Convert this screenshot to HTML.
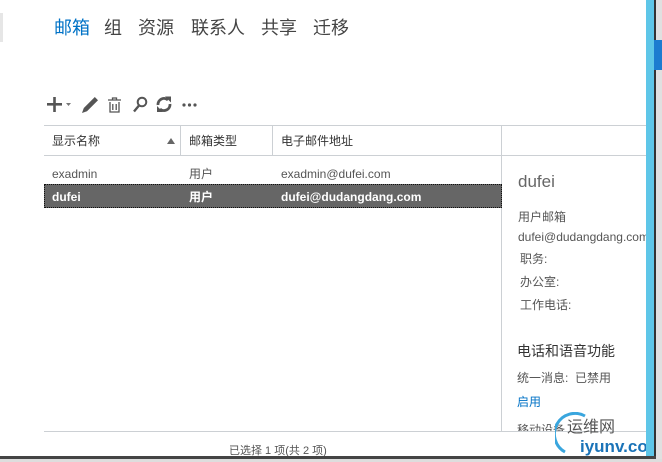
<!DOCTYPE html>
<html><head><meta charset="utf-8"><style>
*{margin:0;padding:0;box-sizing:border-box}
body{width:662px;height:462px;overflow:hidden;background:#fff;position:relative;font-family:"Segoe UI","Liberation Sans","Noto Sans CJK SC",sans-serif;color:#444}
.a{position:absolute;white-space:nowrap;line-height:16px}
.nav{top:18px;font-size:18px;line-height:20px;color:#444}
.hd{font-size:12px;color:#333;top:133px}
.r{font-size:12px;color:#555}
.sel{font-size:12px;color:#fff;font-weight:bold}
.p{font-size:12px;color:#555}
</style></head><body>
<div class="a" style="left:0;top:13px;width:3px;height:29px;background:#e6e6e6"></div>
<div class="a nav" style="left:54px;color:#0072c6">邮箱</div>
<div class="a nav" style="left:104px">组</div>
<div class="a nav" style="left:138px">资源</div>
<div class="a nav" style="left:191px">联系人</div>
<div class="a nav" style="left:261px">共享</div>
<div class="a nav" style="left:313px">迁移</div>

<svg class="a" style="left:44px;top:94px" width="160" height="20" viewBox="0 0 160 20">
<g fill="#555" stroke="#555">
<rect x="3" y="9" width="15" height="2.6" stroke="none"/><rect x="9.2" y="3" width="2.6" height="15" stroke="none"/>
<path d="M22 9h5l-2.5 3z" stroke="none" fill="#777"/>
<path d="M38 19l1.8-5 11-11 3.2 3.2-11 11z" stroke="none"/>
<g fill="none" stroke-width="1.3"><path d="M64 6h13M68.5 6V4h4v2M66 8v10h9V8M68.8 10v6M72.2 10v6"/></g>
<circle cx="98" cy="8" r="4.3" fill="none" stroke-width="2"/><path d="M95 11.5l-5 6" stroke-width="2.4"/>
<path d="M114 11a6 6 0 0 1 10-5M126 10a6 6 0 0 1-10 5" fill="none" stroke-width="2.8"/>
<path d="M121 2.5h6v6z M119 18h-6v-6z" stroke="none"/>
<circle cx="140" cy="11" r="1.6" stroke="none"/><circle cx="145.5" cy="11" r="1.6" stroke="none"/><circle cx="151" cy="11" r="1.6" stroke="none"/>
</g></svg>

<div class="a" style="left:44px;top:125px;width:602px;height:1px;background:#ccd0d4"></div>
<div class="a" style="left:44px;top:155px;width:602px;height:1px;background:#ccd0d4"></div>
<div class="a" style="left:180px;top:126px;width:1px;height:29px;background:#ccd0d4"></div>
<div class="a" style="left:272px;top:126px;width:1px;height:29px;background:#ccd0d4"></div>
<div class="a" style="left:501px;top:126px;width:1px;height:305px;background:#ccd0d4"></div>
<div class="a hd" style="left:52px">显示名称</div>
<div class="a" style="left:167px;top:138px;width:0;height:0;border-left:4px solid transparent;border-right:4px solid transparent;border-bottom:6px solid #666"></div>
<div class="a hd" style="left:189px">邮箱类型</div>
<div class="a hd" style="left:281px">电子邮件地址</div>

<div class="a r" style="left:52px;top:166px">exadmin</div>
<div class="a r" style="left:189px;top:166px">用户</div>
<div class="a r" style="left:281px;top:166px">exadmin@dufei.com</div>
<div class="a" style="left:44px;top:184px;width:458px;height:24px;background:#666;border:1px dotted #111"></div>
<div class="a sel" style="left:52px;top:189px">dufei</div>
<div class="a sel" style="left:189px;top:189px">用户</div>
<div class="a sel" style="left:281px;top:189px">dufei@dudangdang.com</div>

<div class="a" style="left:518px;top:172px;font-size:17px;line-height:20px;color:#666">dufei</div>
<div class="a p" style="left:518px;top:209px">用户邮箱</div>
<div class="a p" style="left:518px;top:229px">dufei@dudangdang.com</div>
<div class="a p" style="left:520px;top:251px">职务:</div>
<div class="a p" style="left:520px;top:274px">办公室:</div>
<div class="a p" style="left:520px;top:297px">工作电话:</div>
<div class="a" style="left:517px;top:342px;font-size:14px;line-height:18px;color:#333">电话和语音功能</div>
<div class="a p" style="left:517px;top:370px">统一消息:&nbsp; 已禁用</div>
<div class="a p" style="left:517px;top:394px;color:#0072c6">启用</div>
<div class="a p" style="left:517px;top:422px;height:9px;overflow:hidden">移动设备</div>

<div class="a" style="left:44px;top:431px;width:602px;height:1px;background:#ccd0d4"></div>
<div class="a" style="left:229px;top:444px;font-size:11px;line-height:14px;color:#555">已选择 1 项(共 2 项)</div>

<div class="a" style="left:567px;top:418px;font-size:16px;line-height:20px;color:#555">运维网</div>
<div class="a" style="left:580px;top:437px;font-size:17px;line-height:20px;color:#1a73b8;font-weight:bold">iyunv.com</div>
<svg class="a" style="left:555px;top:412px" width="40" height="46"><path d="M30 4a18 18 0 0 0-20 36" fill="none" stroke="#3aa6de" stroke-width="3"/></svg>

<div class="a" style="left:646px;top:0;width:8px;height:456px;background:#5ec6e8"></div>
<div class="a" style="left:654px;top:0;width:2px;height:458px;background:#333"></div>
<div class="a" style="left:656px;top:0;width:6px;height:462px;background:#e0e0e0"></div>
<div class="a" style="left:654px;top:40px;width:8px;height:30px;background:#1c7cd0"></div>
<div class="a" style="left:0;top:456px;width:656px;height:3px;background:#444"></div>
<div class="a" style="left:0;top:459px;width:662px;height:3px;background:#ddd"></div>
</body></html>
